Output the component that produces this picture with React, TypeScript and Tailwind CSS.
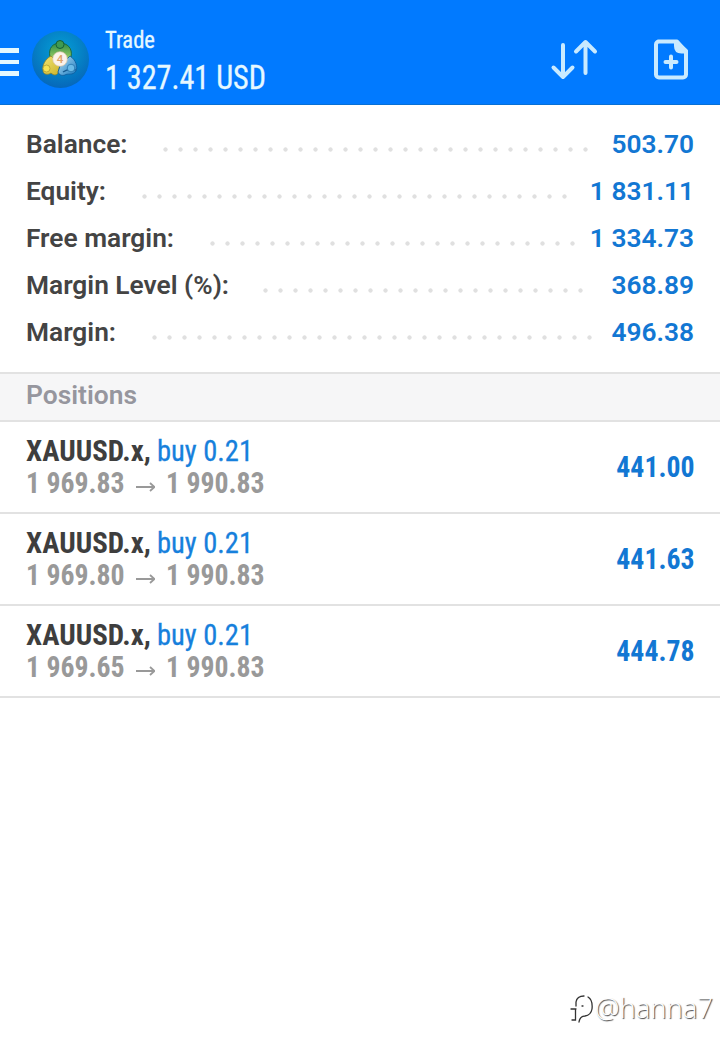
const summary = [
  { label: "Balance:", value: "503.70", labelWidth: "w-[132px]", dots: "w-[435px]" },
  { label: "Equity:", value: "1 831.11", labelWidth: "w-[111px]", dots: "w-[435px]" },
  { label: "Free margin:", value: "1 334.73", labelWidth: "w-[179px]", dots: "w-[375px]" },
  { label: "Margin Level (%):", value: "368.89", labelWidth: "w-[232px]", dots: "w-[330px]" },
  { label: "Margin:", value: "496.38", labelWidth: "w-[121px]", dots: "w-[450px]" },
];

const positions = [
  { open: "1 969.83", current: "1 990.83", profit: "441.00" },
  { open: "1 969.80", current: "1 990.83", profit: "441.63" },
  { open: "1 969.65", current: "1 990.83", profit: "444.78" },
];

function Logo() {
  return (
    <svg className="ml-[12px] size-[60px] shrink-0" viewBox="31 30 60 60">
      <defs>
        <radialGradient id="disc" cx="50%" cy="35%" r="65%">
          <stop offset="0" stopColor="#04a0d8" />
          <stop offset="0.55" stopColor="#0583c6" />
          <stop offset="1" stopColor="#0667ba" />
        </radialGradient>
        <linearGradient id="green" x2="0" y2="1">
          <stop offset="0" stopColor="#2c8a45" />
          <stop offset="1" stopColor="#a5d66a" />
        </linearGradient>
        <linearGradient id="yellow" x2="1" y2="1">
          <stop offset="0" stopColor="#f0e572" />
          <stop offset="1" stopColor="#cdb32a" />
        </linearGradient>
        <linearGradient id="blue" x2="1" y2="1">
          <stop offset="0" stopColor="#b4e0f5" />
          <stop offset="1" stopColor="#1a7ac0" />
        </linearGradient>
      </defs>
      <circle cx="60.500" cy="59.500" r="28.500" fill="url(#disc)" />
      <path d="M50 57c-2-9 3-14 10-14s13 5 11 14l-5 3H54z" fill="url(#green)" stroke="#1b6b42" strokeWidth="1" />
      <path d="M51 56c-6 3-9 10-8 14 0 5 5 5 8 3 3 3 6 2 7 0l2-8z" fill="url(#yellow)" stroke="#8f8428" strokeWidth=".8" />
      <path d="M70 56c6 4 8 11 6 15-3 5-9 2-11 4-3 1-6 0-7-3l2-6z" fill="url(#blue)" stroke="#0d599b" strokeWidth=".8" />
      <path d="M63 72q5-4 13-2" stroke="#14598f" strokeWidth="1.200" fill="none" />
      <circle cx="60" cy="44.500" r="4" fill="#3f9a52" stroke="#155f38" />
      <circle cx="46.500" cy="68.500" r="3.500" fill="#f4e356" stroke="#a8962e" strokeWidth=".7" />
      <circle cx="71" cy="68" r="3.800" fill="#6bbbe8" stroke="#1d6ba5" strokeWidth=".7" />
      <circle cx="60" cy="59" r="7.300" fill="#fbf3ea" stroke="#d9c4a8" strokeWidth=".7" />
      <text x="60" y="63" textAnchor="middle" fontFamily="Roboto, sans-serif" fontWeight="500" fontSize="11.500" fill="#dda268">4</text>
    </svg>
  );
}

function Header() {
  return (
    <header className="flex h-[105px] items-start border-b border-[#0870d5] bg-[#017aff] text-[#e6f8ff]">
      <div className="mt-[48px] flex w-[19px] shrink-0 flex-col gap-[7px]">
        <div className="h-[4.500px] bg-[#e4f8ff]" />
        <div className="h-[4.500px] bg-[#e4f8ff]" />
        <div className="h-[4.500px] bg-[#e4f8ff]" />
      </div>
      <div className="mt-[30px] flex">
        <Logo />
      </div>
      <div className="ml-[14px] mt-[26px] grow whitespace-nowrap font-['Roboto_Condensed',Roboto,sans-serif] font-stretch-condensed">
        <div className="origin-left scale-x-[0.94] text-[24px] leading-[28px] [-webkit-text-stroke:0.300px_#e6f8ff]">Trade</div>
        <div className="mt-[4px] origin-left scale-x-[0.914] text-[33px] leading-[40px] [-webkit-text-stroke:0.300px_#e6f8ff]">1 327.41 USD</div>
      </div>
      <svg className="mr-[54px] mt-[36px] h-[46px] w-[50px]" viewBox="0 0 50 46" fill="none" stroke="#c9eaff" strokeWidth="4" strokeLinecap="round" strokeLinejoin="round">
        <path d="M14 9v32M4.500 31.500L14 41l9.500-9.500M36.500 37V6M27 15.500L36.500 6l9.500 9.500" />
      </svg>
      <svg className="mr-[31px] mt-[38px] h-[44px] w-[36px]" viewBox="0 0 36 44" fill="none" stroke="#c9eaff" strokeWidth="4" strokeLinecap="round" strokeLinejoin="round">
        <path d="M5 3.500h19l9 10v23a3 3 0 0 1-3 3H6a3 3 0 0 1-3-3v-30a3 3 0 0 1 3-3z" />
        <path d="M23.500 5v3q0 5 5 5h4z" fill="#c9eaff" strokeWidth="5" />
        <path d="M18 18.500v11M12.500 24h11" />
      </svg>
    </header>
  );
}

function Watermark() {
  return (
    <div className="mt-auto mb-[27px] mr-[7px] flex items-center justify-end text-white [text-shadow:1px_1px_1px_#444]">
      <svg className="h-[32px] w-[26px]" viewBox="0 0 26 32" fill="none" strokeLinecap="round">
        <path d="M2 17h5M3 28h3.500V18M7 14V10q1-6 8-6M13 14h1M19 5q5 3 4 12-1 6-7 7-5 0-6 6" stroke="#333" strokeWidth="1.300" />
      </svg>
      <span className="font-['Open_Sans',sans-serif] text-[27.500px] font-light leading-[32px]">@hanna7</span>
    </div>
  );
}

export default function App() {
  return (
    <div className="flex h-[1051px] w-[720px] flex-col overflow-hidden bg-white font-[Roboto,sans-serif]">
      <Header />
      <section className="h-[267px] shrink-0 px-[26px] pt-[16px]">
        {summary.map((row) => (
          <div key={row.label} className="flex h-[47px] items-center whitespace-nowrap text-[26.300px] font-semibold">
            <span className={`${row.labelWidth} shrink-0 text-[#444]`}>{row.label}</span>
            <span className={`${row.dots} mt-[10px] h-[15px] shrink-0 bg-[radial-gradient(circle_at_7.500px_7.500px,#e0e0e0_1.800px,transparent_2.500px)] bg-[length:15px_15px]`} />
            <span className="ml-auto text-[#1277d3]">{row.value}</span>
          </div>
        ))}
      </section>
      <h2 className="flex h-[50px] shrink-0 items-center border-y-2 border-[#e2e2e2] bg-[#f6f6f7] px-[26px] pb-[2px] text-[26.400px] font-semibold text-[#96969e]">
        Positions
      </h2>
      <ul className="font-['Roboto_Condensed',Roboto,sans-serif] font-stretch-condensed">
        {positions.map((p) => (
          <li key={p.open} className="flex h-[92px] items-center justify-between whitespace-nowrap border-b-2 border-[#e2e2e2] px-[26px] text-[30px] leading-[32px]">
            <div>
              <div className="flex">
                <b className="w-[131px] origin-left scale-x-[0.963] text-[#3e3e3e]">XAUUSD.x,</b>
                <span className="origin-left scale-x-[0.95] text-[#1680dc] [-webkit-text-stroke:0.300px_#1680dc]">buy 0.21</span>
              </div>
              <div className="flex items-center font-bold text-[#999]">
                <span className="w-[109px] origin-left scale-x-[0.925]">{p.open}</span>
                <svg className="mr-[11px] mt-[8px] h-[10px] w-[20px]" viewBox="0 0 20 10" fill="none" stroke="#999" strokeWidth="1.800">
                  <path d="M1 5h18M15 1l4.500 4-4.500 4" />
                </svg>
                <span className="origin-left scale-x-[0.925]">{p.current}</span>
              </div>
            </div>
            <b className="-mr-px origin-right scale-x-[0.925] text-[#1277d3]">{p.profit}</b>
          </li>
        ))}
      </ul>
      <Watermark />
    </div>
  );
}
